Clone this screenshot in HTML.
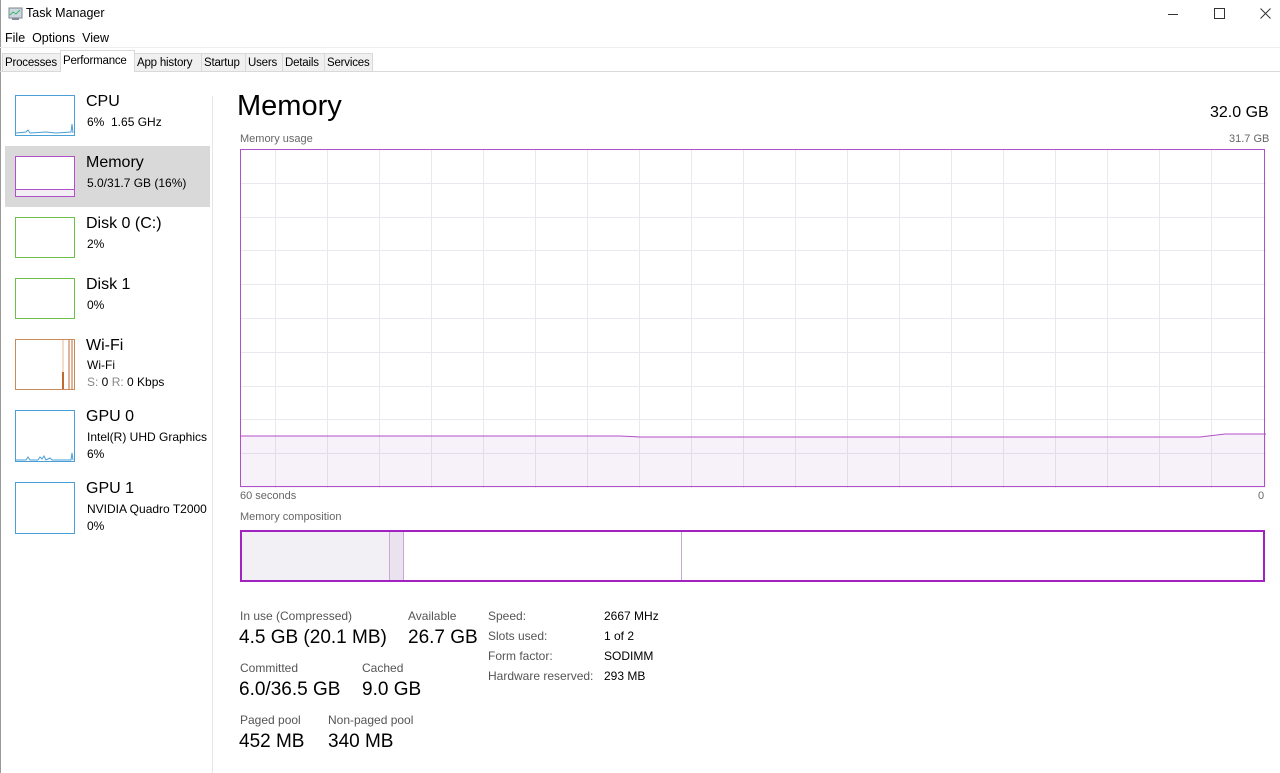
<!DOCTYPE html><html><head><style>
body{margin:0;width:1280px;height:773px;background:#fff;font-family:"Segoe UI","Liberation Sans",sans-serif;position:relative;overflow:hidden;color:#000}
.a{position:absolute;white-space:nowrap}
.tab{position:absolute;top:53px;height:19px;background:#f0f0f0;border:1px solid #d9d9d9;font-size:11.5px;line-height:18px;padding:0 2px;box-sizing:border-box;white-space:nowrap;overflow:hidden;letter-spacing:-0.2px}
.th{position:absolute;left:15px;width:60px;height:41px;box-sizing:border-box;border:1px solid}
.n{font-size:16px;left:86px}
.s{font-size:12px;left:87px}
.lbl{font-size:12px;color:#666}
.big{font-size:19px}
.k{font-size:12px;color:#555}
.v{font-size:12px}
</style></head><body>
<div class="a" style="left:0;top:0;width:1px;height:773px;background:#999"></div>
<svg class="a" style="left:8px;top:7px" width="16" height="14"><rect x="1" y="1" width="13" height="10" fill="#cfd6de" stroke="#7a8894"/><polyline points="2,8 5,5 8,7 12,3" fill="none" stroke="#3b6"/><rect x="4" y="11" width="7" height="2" fill="#889"/></svg>
<div class="a" style="left:26px;top:6px;font-size:12.5px">Task Manager</div>
<div class="a" style="left:1168px;top:14px;width:10px;height:1px;background:#333"></div>
<div class="a" style="left:1214px;top:8px;width:9px;height:9px;border:1px solid #333"></div>
<svg class="a" style="left:1260px;top:8px" width="11" height="11"><path d="M0.5,0.5L10.5,10.5M10.5,0.5L0.5,10.5" stroke="#333"/></svg>
<div class="a" style="left:5px;top:31px;font-size:12.5px">File&nbsp;&nbsp;Options&nbsp;&nbsp;View</div>
<div class="a" style="left:0;top:47px;width:1280px;height:1px;background:#eee"></div>
<div class="a" style="left:0;top:71px;width:1280px;height:1px;background:#d9d9d9"></div>
<div class="tab" style="left:2px;width:59px">Processes</div>
<div class="tab" style="left:60px;top:50px;height:22px;width:75px;background:#fff;border-bottom:none;line-height:21px">Performance</div>
<div class="tab" style="left:134px;width:68px">App history</div>
<div class="tab" style="left:201px;width:45px">Startup</div>
<div class="tab" style="left:245px;width:38px">Users</div>
<div class="tab" style="left:282px;width:43px">Details</div>
<div class="tab" style="left:324px;width:49px">Services</div>
<div class="a" style="left:212px;top:96px;width:1px;height:677px;background:#e6e6e6"></div>

<div class="th" style="top:95px;border-color:#4a9fd6"><svg width="58" height="39"><polyline points="0,37 10,36 12,34 14,37 30,36 40,37 55,36 56,28 57,37" fill="none" stroke="#4a9fd6"/></svg></div>
<div class="a n" style="top:93px">CPU</div><div class="a s" style="top:115px">6%&nbsp; 1.65 GHz</div>

<div class="a" style="left:5px;top:146px;width:205px;height:61px;background:#d9d9d9"></div>
<div class="th" style="top:156px;border-color:#b04fc8;background:#fff"><div style="position:absolute;left:0;right:0;bottom:0;height:6px;background:#f1eef4;border-top:1px solid #b04fc8"></div></div>
<div class="a n" style="top:154px">Memory</div><div class="a s" style="top:176px">5.0/31.7 GB (16%)</div>

<div class="th" style="top:217px;border-color:#6cbf4a"></div>
<div class="a n" style="top:215px">Disk 0 (C:)</div><div class="a s" style="top:237px">2%</div>
<div class="th" style="top:278px;border-color:#6cbf4a"></div>
<div class="a n" style="top:276px">Disk 1</div><div class="a s" style="top:298px">0%</div>

<div class="th" style="top:339px;height:51px;border-color:#c78a5a"><svg width="58" height="49"><line x1="47" y1="0" x2="47" y2="49" stroke="#e8b89a"/><line x1="47" y1="32" x2="47" y2="49" stroke="#c06a30" stroke-width="2"/><line x1="53" y1="0" x2="53" y2="49" stroke="#c06a30"/><line x1="56" y1="0" x2="56" y2="49" stroke="#c06a30"/></svg></div>
<div class="a n" style="top:337px">Wi-Fi</div><div class="a s" style="top:358px">Wi-Fi</div><div class="a s" style="top:375px"><span style="color:#888">S:</span> 0 <span style="color:#888">R:</span> 0 Kbps</div>

<div class="th" style="top:410px;height:52px;border-color:#4a9fd6"><svg width="58" height="50"><polyline points="0,49 10,49 12,46 14,49 22,49 24,46 26,48 28,45 30,49 34,47 36,49 55,49 56,42 57,49" fill="none" stroke="#4a9fd6"/></svg></div>
<div class="a n" style="top:408px">GPU 0</div><div class="a s" style="top:430px;width:124px;overflow:hidden">Intel(R) UHD Graphics ..</div><div class="a s" style="top:447px">6%</div>
<div class="th" style="top:482px;height:52px;border-color:#4a9fd6"></div>
<div class="a n" style="top:480px">GPU 1</div><div class="a s" style="top:502px">NVIDIA Quadro T2000</div><div class="a s" style="top:519px">0%</div>

<div class="a" style="left:237px;top:90px;font-size:29px">Memory</div>
<div class="a" style="left:1210px;top:104px;font-size:16px">32.0 GB</div>
<div class="a lbl" style="left:240px;top:133px;font-size:11px">Memory usage</div>
<div class="a lbl" style="left:1229px;top:133px;font-size:11px">31.7 GB</div>
<svg class="a" style="left:240px;top:149px" width="1026" height="339">
<g stroke="#ece6ef" stroke-width="1">
<line x1="35.5" y1="0" x2="35.5" y2="339"/><line x1="87.5" y1="0" x2="87.5" y2="339"/><line x1="139.5" y1="0" x2="139.5" y2="339"/><line x1="191.5" y1="0" x2="191.5" y2="339"/><line x1="243.5" y1="0" x2="243.5" y2="339"/><line x1="295.5" y1="0" x2="295.5" y2="339"/><line x1="347.5" y1="0" x2="347.5" y2="339"/><line x1="399.5" y1="0" x2="399.5" y2="339"/><line x1="451.5" y1="0" x2="451.5" y2="339"/><line x1="503.5" y1="0" x2="503.5" y2="339"/><line x1="555.5" y1="0" x2="555.5" y2="339"/><line x1="607.5" y1="0" x2="607.5" y2="339"/><line x1="659.5" y1="0" x2="659.5" y2="339"/><line x1="711.5" y1="0" x2="711.5" y2="339"/><line x1="763.5" y1="0" x2="763.5" y2="339"/><line x1="815.5" y1="0" x2="815.5" y2="339"/><line x1="867.5" y1="0" x2="867.5" y2="339"/><line x1="919.5" y1="0" x2="919.5" y2="339"/><line x1="971.5" y1="0" x2="971.5" y2="339"/>
<line x1="0" y1="34.5" x2="1026" y2="34.5"/><line x1="0" y1="68.5" x2="1026" y2="68.5"/><line x1="0" y1="101.5" x2="1026" y2="101.5"/><line x1="0" y1="135.5" x2="1026" y2="135.5"/><line x1="0" y1="169.5" x2="1026" y2="169.5"/><line x1="0" y1="203.5" x2="1026" y2="203.5"/><line x1="0" y1="237.5" x2="1026" y2="237.5"/><line x1="0" y1="270.5" x2="1026" y2="270.5"/><line x1="0" y1="304.5" x2="1026" y2="304.5"/>
</g>
<path d="M0,287 L380,287 L400,288 L960,288 L985,285 L1026,285 L1026,339 L0,339Z" fill="#b080c0" fill-opacity="0.1"/>
<path d="M0,287 L380,287 L400,288 L960,288 L985,285 L1026,285" fill="none" stroke="#b04fc8"/>
<rect x="0.5" y="0.5" width="1024" height="337" fill="none" stroke="#b04fc8"/>
</svg>
<div class="a lbl" style="left:240px;top:490px;font-size:11px">60 seconds</div>
<div class="a lbl" style="left:1258px;top:490px;font-size:11px">0</div>
<div class="a lbl" style="left:240px;top:511px;font-size:11px">Memory composition</div>
<svg class="a" style="left:240px;top:530px" width="1026" height="52">
<rect x="1" y="1" width="148" height="50" fill="#f2f0f4"/>
<rect x="149" y="1" width="14" height="50" fill="#ebe2ef"/>
<line x1="149.5" y1="1" x2="149.5" y2="51" stroke="#c9a8d5"/><line x1="163.5" y1="1" x2="163.5" y2="51" stroke="#c9a8d5"/><line x1="441.5" y1="1" x2="441.5" y2="51" stroke="#c9a8d5"/>
<rect x="1" y="1" width="1023" height="50" fill="none" stroke="#a022c0" stroke-width="2"/>
</svg>
<div class="a k" style="left:240px;top:609px">In use (Compressed)</div>
<div class="a big" style="left:239px;top:627px">4.5 GB (20.1 MB)</div>
<div class="a k" style="left:408px;top:609px">Available</div>
<div class="a big" style="left:408px;top:627px">26.7 GB</div>
<div class="a k" style="left:240px;top:661px">Committed</div>
<div class="a big" style="left:239px;top:679px">6.0/36.5 GB</div>
<div class="a k" style="left:362px;top:661px">Cached</div>
<div class="a big" style="left:362px;top:679px">9.0 GB</div>
<div class="a k" style="left:240px;top:713px">Paged pool</div>
<div class="a big" style="left:239px;top:731px">452 MB</div>
<div class="a k" style="left:328px;top:713px">Non-paged pool</div>
<div class="a big" style="left:328px;top:731px">340 MB</div>
<div class="a k" style="left:488px;top:609px">Speed:</div><div class="a v" style="left:604px;top:609px">2667 MHz</div>
<div class="a k" style="left:488px;top:629px">Slots used:</div><div class="a v" style="left:604px;top:629px">1 of 2</div>
<div class="a k" style="left:488px;top:649px">Form factor:</div><div class="a v" style="left:604px;top:649px">SODIMM</div>
<div class="a k" style="left:488px;top:669px">Hardware reserved:</div><div class="a v" style="left:604px;top:669px">293 MB</div>
</body></html>
